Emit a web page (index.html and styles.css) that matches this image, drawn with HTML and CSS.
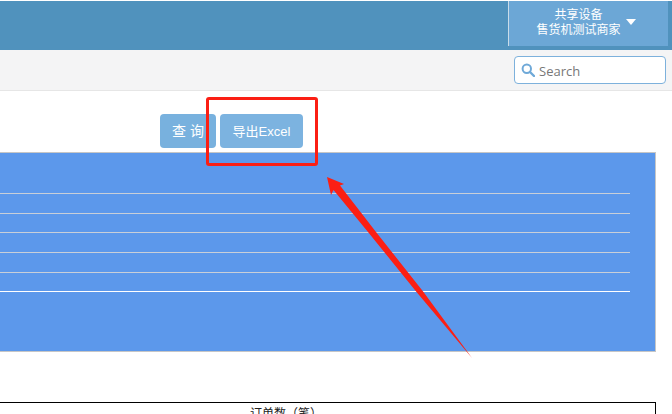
FILE: index.html
```html
<!DOCTYPE html>
<html lang="zh-CN">
<head>
    <meta charset="UTF-8">
    <meta name="viewport" content="width=device-width, initial-scale=1.0">
    <title>共享设备</title>
    <link rel="stylesheet" href="styles.css">
</head>
<body>
    <header class="top-bar">
        <div class="account">
            <div class="account-name">
                <span>共享设备</span>
                <span>售货机测试商家</span>
            </div>
            <span class="caret"></span>
        </div>
    </header>

    <div class="search-bar">
        <div class="search-box">
            <svg class="search-icon" viewBox="0 0 14 14" width="14" height="14">
                <circle cx="5.8" cy="5.8" r="4.2" fill="none" stroke="#6fa9d8" stroke-width="2"/>
                <path d="M9 9l4 4" fill="none" stroke="#6fa9d8" stroke-width="2.4" stroke-linecap="round"/>
            </svg>
            <span class="search-text">Search</span>
        </div>
    </div>

    <main class="content">
        <div class="actions">
            <button class="btn btn-query">查 询</button>
            <button class="btn btn-export">导出Excel</button>
        </div>

        <div class="chart">
            <div class="chart-line"></div>
            <div class="chart-line"></div>
            <div class="chart-line"></div>
            <div class="chart-line"></div>
            <div class="chart-line"></div>
            <div class="chart-line chart-line-base"></div>
        </div>

        <div class="table-head">订单数（笔）</div>
    </main>

    <!-- 红色标注 -->
    <div class="mark-box"></div>
    <svg class="mark-arrow" width="672" height="414" viewBox="0 0 672 414">
        <polygon points="327,177 344,184 340,185.500 376,232 423.500,292 472,358 416.500,292 368,232 333.500,190 331,195" fill="#fb1f14"/>
    </svg>
</body>
</html>
```

FILE: styles.css
```css
html, body {
    height: 100%;
}

body {
    position: relative;
    margin: 0;
    overflow: hidden;
    background-color: white;
    font-family: "Liberation Sans", "Noto Sans CJK SC", sans-serif;
}

.top-bar {
    display: flex;
    justify-content: flex-end;
    align-items: flex-start;
    height: 49px;
    margin-top: 1px;
    padding-right: 4px;
    background-color: #5092bd;
}

.account {
    display: flex;
    align-items: center;
    justify-content: center;
    gap: 5px;
    width: 154px;
    height: 44px;
    padding: 0 5px 1px 0;
    border-left: 1px solid #c9dce9;
    background-color: #6ca7d6;
    color: white;
    font-size: 12px;
}

.account-name {
    display: flex;
    flex-direction: column;
    align-items: center;
    line-height: 15px;
}

.caret {
    width: 0;
    height: 0;
    margin-bottom: 3px;
    border-left: 5px solid transparent;
    border-right: 5px solid transparent;
    border-top: 6px solid white;
}

.search-bar {
    display: flex;
    justify-content: flex-end;
    align-items: center;
    box-sizing: border-box;
    height: 41px;
    padding: 0 6px 1px 0;
    background-color: #f4f4f5;
    border-bottom: 1px solid #e6e6e6;
}

.search-box {
    display: flex;
    align-items: center;
    gap: 4px;
    box-sizing: border-box;
    width: 152px;
    height: 28px;
    padding-left: 6px;
    background-color: white;
    border: 1px solid #7db1dc;
    border-radius: 4px;
}

.search-icon {
    flex: none;
}

.search-text {
    padding-top: 3px;
    color: #777;
    font-family: "Open Sans", sans-serif;
    font-size: 13px;
}

.actions {
    display: flex;
    justify-content: flex-start;
    gap: 4px;
    padding: 23px 0 0 160px;
}

.btn {
    height: 34px;
    padding: 0 0 2px;
    border: none;
    border-radius: 4px;
    background-color: #78b1de;
    color: white;
    font-family: inherit;
    font-size: 14px;
}

.btn-query {
    width: 56px;
}

.btn-export {
    width: 83px;
    background-color: #7cb3e0;
    font-size: 13px;
}

.chart {
    box-sizing: border-box;
    width: 656px;
    height: 200px;
    margin-top: 4px;
    padding: 40px 25px 0 0;
    background-color: #5c98eb;
    border: 1px solid #c6c6c6;
    border-left: none;
}

.chart-line {
    height: 1px;
    margin-bottom: 18.700px;
    background-color: #c9cfd8;
}

.chart-line-base {
    margin-top: 0.500px;
    background-color: white;
}

.table-head {
    box-sizing: border-box;
    width: 656px;
    height: 12px;
    margin-top: 50px;
    padding: 4px 0 0 250px;
    overflow: hidden;
    border: 1px solid black;
    border-left: none;
    border-bottom: none;
    color: #222;
    font-size: 12px;
    line-height: 14px;
}

.mark-box {
    position: absolute;
    left: 206px;
    top: 97px;
    box-sizing: border-box;
    width: 112px;
    height: 69px;
    border: 3px solid #fb1f14;
    border-radius: 3px;
}

.mark-arrow {
    position: absolute;
    left: 0;
    top: 0;
}
```
